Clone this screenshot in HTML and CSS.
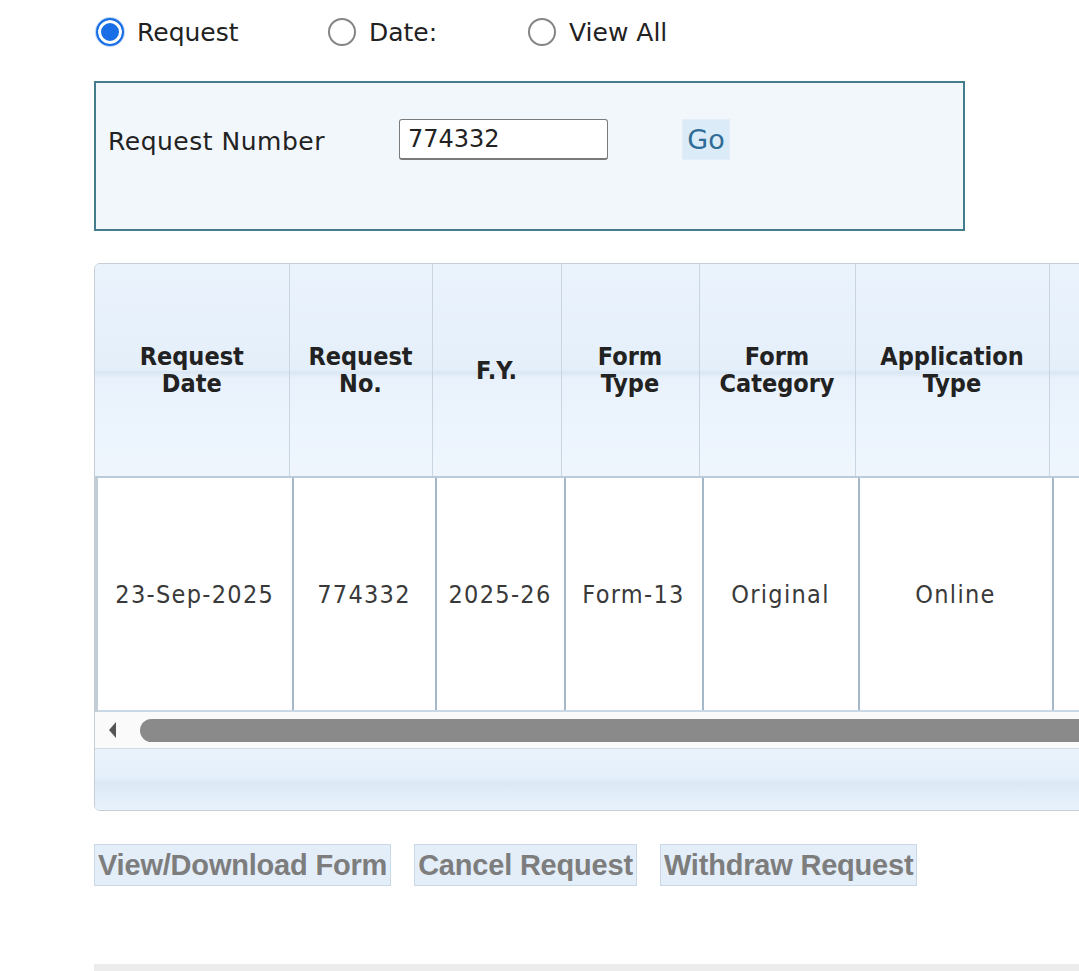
FILE: index.html
```html
<!DOCTYPE html>
<html lang="en">
<head>
  <meta charset="UTF-8" />
  <title>Request Status</title>
  <link rel="stylesheet" href="styles.css">
</head>
<body>
  <div class="page">
    <div class="filter-row">
      <label class="opt opt-request"><input type="radio" name="mode" checked>Request</label>
      <label class="opt opt-date"><input type="radio" name="mode">Date:</label>
      <label class="opt"><input type="radio" name="mode">View All</label>
    </div>

    <div class="search-box">
      <label class="search-label" for="reqno">Request Number</label>
      <input class="search-input" id="reqno" type="text" value="774332">
      <button class="go-btn">Go</button>
    </div>

    <div class="grid">
      <table class="grid-head">
        <colgroup>
          <col style="width:194px"><col style="width:143px"><col style="width:129px">
          <col style="width:138px"><col style="width:156px"><col style="width:194px"><col style="width:230px">
        </colgroup>
        <tr>
          <th>Request<br>Date</th>
          <th>Request<br>No.</th>
          <th>F.Y.</th>
          <th>Form<br>Type</th>
          <th>Form<br>Category</th>
          <th>Application<br>Type</th>
          <th>Status</th>
        </tr>
      </table>
      <table class="grid-body">
        <colgroup>
          <col style="width:196px"><col style="width:143px"><col style="width:129px">
          <col style="width:138px"><col style="width:156px"><col style="width:194px"><col style="width:200px">
        </colgroup>
        <tr>
          <td>23-Sep-2025</td>
          <td>774332</td>
          <td>2025-26</td>
          <td>Form-13</td>
          <td>Original</td>
          <td>Online</td>
          <td>Not Started</td>
        </tr>
      </table>
      <div class="hscroll">
        <span class="hscroll-arrow"></span>
        <span class="hscroll-thumb"></span>
      </div>
      <div class="grid-foot"></div>
    </div>

    <div class="actions">
      <button class="act-btn">View/Download Form</button>
      <button class="act-btn">Cancel Request</button>
      <button class="act-btn">Withdraw Request</button>
    </div>

    <div class="bottom-bar"></div>
  </div>
</body>
</html>
```

FILE: styles.css
```css
* {
  box-sizing: border-box;
}
html, body {
  overflow: hidden;
}
body {
  margin: 0;
  background: #ffffff;
  color: #222;
  font-family: "DejaVu Sans", Verdana, sans-serif;
}
.page {
  width: 1500px;
  padding: 14px 0 0 94px;
}

/* search mode radios */
.filter-row {
  display: flex;
  align-items: center;
  height: 36px;
}
.opt {
  display: flex;
  align-items: center;
  font-size: 25px;
  color: #222;
}
.opt-request {
  width: 232px;
}
.opt-date {
  width: 200px;
}
.opt input {
  appearance: none;
  width: 28px;
  height: 28px;
  margin: 0 13px 0 2px;
  border: 2px solid #858585;
  border-radius: 50%;
  background: #fff;
}
.opt input:checked {
  border-color: #1a6fe6;
  background: #1a6fe6;
  box-shadow: inset 0 0 0 3px #fff, 0 0 0 1px #bcd6f7;
}

/* request number box */
.search-box {
  display: flex;
  align-items: center;
  width: 871px;
  height: 150px;
  margin-top: 31px;
  padding: 0 12px 34px;
  background: #f2f7fc;
  border: 2px solid #437c8b;
}
.search-label {
  width: 291px;
  padding-top: 4px;
  font-size: 25px;
  letter-spacing: 0.5px;
  color: #222;
}
.search-input {
  width: 209px;
  height: 41px;
  padding: 0 8px;
  font-family: inherit;
  font-size: 24px;
  color: #222;
  border: 1px solid #7a7a7a;
  border-bottom-width: 2px;
  border-radius: 3px;
  background: #fff;
}
.go-btn {
  width: 48px;
  height: 41px;
  margin-left: 74px;
  padding: 0;
  font-family: inherit;
  font-size: 27px;
  color: #2f6c97;
  background: #dcebf8;
  border: 1px solid #e3eef9;
}

/* results grid */
.grid {
  width: 1300px;
  margin-top: 32px;
  border: 1px solid #c6cdd4;
  border-radius: 6px;
  overflow: hidden;
}
.grid table {
  border-collapse: collapse;
  table-layout: fixed;
  font-family: "DejaVu Sans Condensed", "DejaVu Sans", sans-serif;
  font-stretch: condensed;
}
.grid-head th {
  height: 213px;
  padding: 0 4px;
  font-size: 25px;
  line-height: 27px;
  font-weight: bold;
  color: #222;
  text-align: center;
  border-right: 1px solid #c9d6e2;
  background: linear-gradient(#eaf3fc 0%, #e5effa 50%, #d9e6f3 51%, #e9f2fc 54%, #eef5fd 100%);
}
.grid-head {
  border-bottom: 2px solid #bccbd9;
}
.grid-body td {
  height: 233px;
  padding: 0 4px;
  font-size: 25px;
  letter-spacing: 1.3px;
  color: #3a3a3a;
  text-align: center;
  white-space: nowrap;
  border-right: 2px solid #a4b8c8;
  border-bottom: 2px solid #c8d8e6;
  background: #fff;
}
.grid-body td:first-child {
  border-left: 3px solid #c3cdd6;
}

/* horizontal scroller */
.hscroll {
  display: flex;
  align-items: center;
  height: 37px;
  padding-left: 14px;
  background: #fafafa;
  border-bottom: 1px solid #cfdbe6;
}
.hscroll-arrow {
  width: 0;
  height: 0;
  border-top: 8px solid transparent;
  border-bottom: 8px solid transparent;
  border-right: 7px solid #555;
  margin-right: 24px;
}
.hscroll-thumb {
  flex: 1;
  height: 23px;
  border-radius: 12px;
  background: #8a8a8a;
}
.grid-foot {
  height: 61px;
  background: linear-gradient(#eaf3fc 0%, #e6f0fa 45%, #dce9f5 55%, #e8f2fc 100%);
}

/* action buttons */
.actions {
  display: flex;
  gap: 23px;
  margin-top: 33px;
}
.act-btn {
  height: 42px;
  padding: 0 3px;
  font-family: "Liberation Sans", Arial, sans-serif;
  font-size: 29px;
  font-weight: bold;
  letter-spacing: -0.2px;
  color: #7d7d7d;
  background: #e3eef9;
  border: 1px solid #c9d9e8;
}

.bottom-bar {
  height: 20px;
  margin-top: 78px;
  background: #ececec;
}
```
